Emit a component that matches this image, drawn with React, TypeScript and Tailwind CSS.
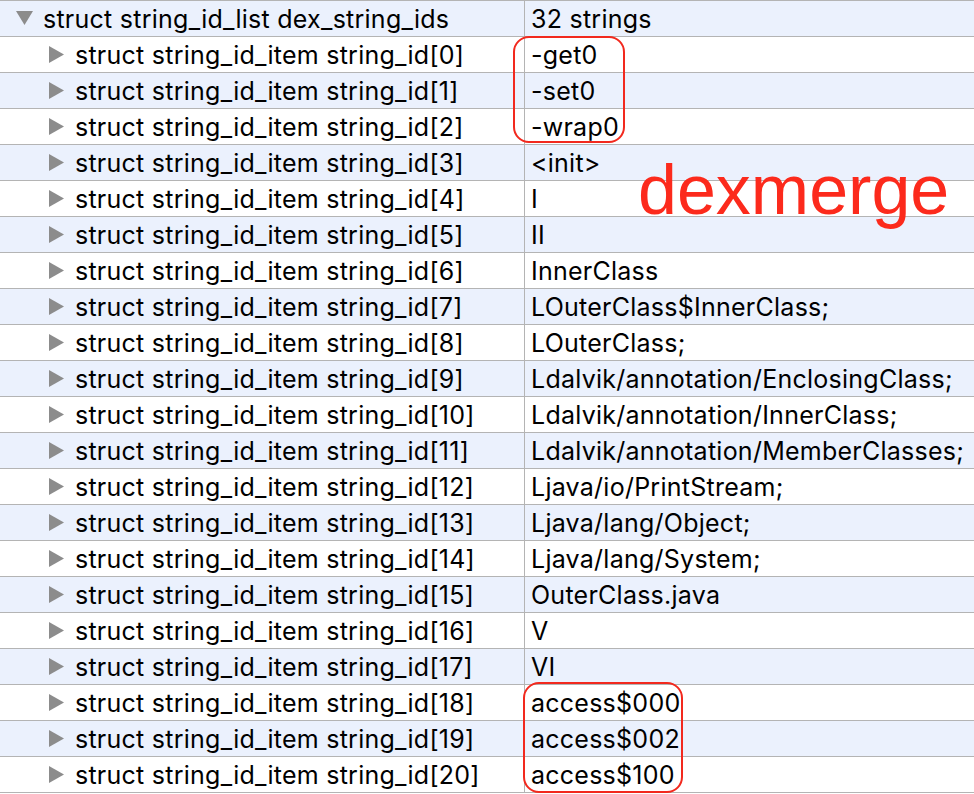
import React from 'react'

const values = [
  '-get0',
  '-set0',
  '-wrap0',
  '<init>',
  'I',
  'II',
  'InnerClass',
  'LOuterClass$InnerClass;',
  'LOuterClass;',
  'Ldalvik/annotation/EnclosingClass;',
  'Ldalvik/annotation/InnerClass;',
  'Ldalvik/annotation/MemberClasses;',
  'Ljava/io/PrintStream;',
  'Ljava/lang/Object;',
  'Ljava/lang/System;',
  'OuterClass.java',
  'V',
  'VI',
  'access$000',
  'access$002',
  'access$100',
]

function Triangle({ open }: { open?: boolean }): React.JSX.Element {
  return open ? (
    <svg width="17" height="15" viewBox="0 0 17 15" className="shrink-0">
      <path d="M0 0 H17 L8.5 14 Z" fill="#8c8c8c" />
    </svg>
  ) : (
    <svg width="15" height="17" viewBox="0 0 15 17" className="shrink-0">
      <path d="M0 0 L15 8.5 L0 17 Z" fill="#8c8c8c" />
    </svg>
  )
}

function Row({ name, value, striped, open }: { name: string; value: string; striped: boolean; open?: boolean }): React.JSX.Element {
  return (
    <div className={`flex h-[36px] border-t border-[#b4b4b4] ${striped ? 'bg-[#ebf1fd]' : 'bg-white'}`}>
      <div className={`flex w-[525px] shrink-0 items-center border-r border-[#b4b4b4] ${open ? 'pl-[16px] gap-[10px]' : 'pl-[49px] gap-[11px]'}`}>
        <Triangle open={open} />
        <span className="whitespace-nowrap pt-[3px]">{name}</span>
      </div>
      <div className="flex items-center pl-[6px] pt-[3px] whitespace-nowrap">{value}</div>
    </div>
  )
}

export default function App(): React.JSX.Element {
  return (
    <div className="relative h-[794px] w-[974px] overflow-hidden bg-white font-['Inter',sans-serif] text-[25px] tracking-[0.25px] text-black">
      <div className="border-b border-[#b4b4b4]">
        <Row name="struct string_id_list dex_string_ids" value="32 strings" striped open />
        {values.map((v, i) => (
          <Row key={i} name={`struct string_id_item string_id[${i}]`} value={v} striped={i % 2 === 1} />
        ))}
      </div>

      {/* annotations */}
      <div className="absolute left-[513px] top-[36px] h-[107px] w-[112px] rounded-[16px] border-2 border-[#f2291e]" />
      <div className="absolute left-[523px] top-[682px] h-[111px] w-[160px] rounded-[16px] border-2 border-[#f2291e]" />
      <div className="absolute left-[638px] top-[150px] font-['Liberation_Sans',sans-serif] text-[70px] leading-[80px] tracking-normal text-[#fc2a1c]">
        dexmerge
      </div>
    </div>
  )
}
